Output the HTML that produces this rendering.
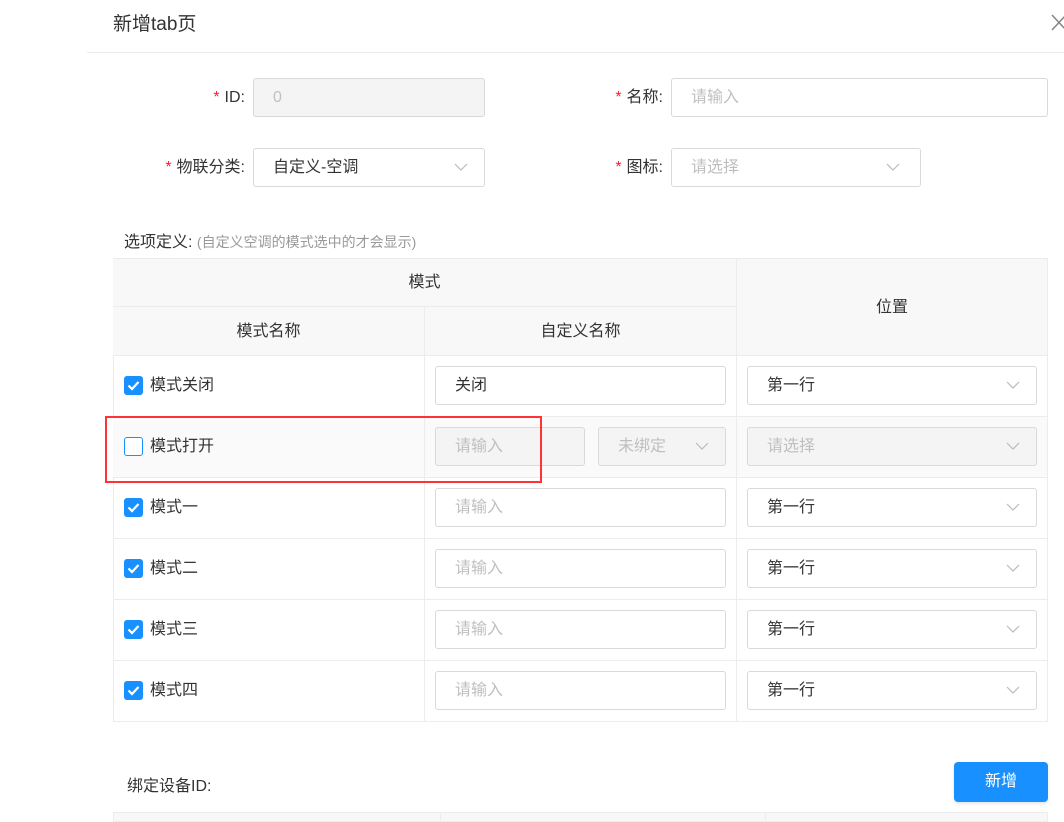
<!DOCTYPE html>
<html><head><meta charset="utf-8"><style>
*{margin:0;padding:0;box-sizing:border-box}
body{width:1064px;height:820px;overflow:hidden;background:#fff;font-family:"Liberation Sans","Noto Sans CJK SC",sans-serif;font-size:16px;color:#333;position:relative}
.a{position:absolute}
.inp{position:absolute;border:1px solid #d9d9d9;border-radius:3px;background:#fff;height:39px;line-height:38px;padding-left:19px;color:#333}
.ph{color:#bfbfbf}
.dis{background:#f4f4f4}
.arr{position:absolute;right:16px;top:13px;width:14px;height:10px}
.lbl{position:absolute;text-align:right;line-height:40px;color:#333}
.req{color:#f5222d;margin-right:5px}
.cell{position:absolute;border-right:1px solid #ececec;border-bottom:1px solid #ececec}
.th{background:#f8f8f8;text-align:center;color:#333}
.cb{position:absolute;left:124px;width:19px;height:19px;border-radius:3px;background:#1890ff}
.cbo{background:#fff;border:1px solid #1890ff}
.mt{position:absolute;left:150px;line-height:20px}
</style></head><body>
<svg width="0" height="0" style="position:absolute"><defs><symbol id="ch" viewBox="0 0 14 10"><path d="M1 2l6 6 6-6" fill="none" stroke="#bbb" stroke-width="1.2"/></symbol><symbol id="ck" viewBox="0 0 19 19"><path d="M4.5 9.5l3.5 3.5L14.5 6" fill="none" stroke="#fff" stroke-width="2.2"/></symbol></defs></svg>

<div class="a" style="left:113px;top:9px;font-size:19px;color:#333">新增tab页</div>
<div class="a" style="left:87px;top:52px;width:977px;height:1px;background:#ebebeb"></div>
<svg class="a" style="left:1050px;top:13px" width="16" height="18"><path d="M2 2l14 15M16 2L2 17" stroke="#888" stroke-width="1.6"/></svg>

<div class="lbl" style="left:150px;width:95px;top:78px"><span class="req">*</span>ID:</div>
<div class="inp dis ph" style="left:253px;top:78px;width:232px">0</div>
<div class="lbl" style="left:560px;width:103px;top:78px"><span class="req">*</span>名称:</div>
<div class="inp ph" style="left:671px;top:78px;width:377px">请输入</div>

<div class="lbl" style="left:130px;width:115px;top:148px"><span class="req">*</span>物联分类:</div>
<div class="inp" style="left:253px;top:148px;width:232px">自定义-空调<svg class="arr"><use href="#ch"/></svg></div>
<div class="lbl" style="left:560px;width:103px;top:148px"><span class="req">*</span>图标:</div>
<div class="inp ph" style="left:671px;top:148px;width:250px">请选择<svg class="arr" style="right:20px"><use href="#ch"/></svg></div>

<div class="a" style="left:124px;top:228px">选项定义: <span style="font-size:14px;color:#999">(自定义空调的模式选中的才会显示)</span></div>

<div class="a" style="left:113px;top:258px;width:935px;height:464px;border-top:1px solid #ececec;border-left:1px solid #ececec"></div>
<div class="cell th" style="left:113px;top:259px;width:624px;height:48px;line-height:48px">模式</div>
<div class="cell th" style="left:113px;top:307px;width:312px;height:49px;line-height:49px">模式名称</div>
<div class="cell th" style="left:425px;top:307px;width:312px;height:49px;line-height:49px">自定义名称</div>
<div class="cell th" style="left:737px;top:259px;width:311px;height:97px;line-height:97px">位置</div>

<div class="cell" style="left:113px;top:356px;width:312px;height:61px"></div><div class="cell" style="left:425px;top:356px;width:312px;height:61px"></div><div class="cell" style="left:737px;top:356px;width:311px;height:61px"></div>
<div class="cell" style="left:113px;top:417px;width:312px;height:61px;background:#fafafa"></div><div class="cell" style="left:425px;top:417px;width:312px;height:61px;background:#fafafa"></div><div class="cell" style="left:737px;top:417px;width:311px;height:61px;background:#fafafa"></div>
<div class="cell" style="left:113px;top:478px;width:312px;height:61px"></div><div class="cell" style="left:425px;top:478px;width:312px;height:61px"></div><div class="cell" style="left:737px;top:478px;width:311px;height:61px"></div>
<div class="cell" style="left:113px;top:539px;width:312px;height:61px"></div><div class="cell" style="left:425px;top:539px;width:312px;height:61px"></div><div class="cell" style="left:737px;top:539px;width:311px;height:61px"></div>
<div class="cell" style="left:113px;top:600px;width:312px;height:61px"></div><div class="cell" style="left:425px;top:600px;width:312px;height:61px"></div><div class="cell" style="left:737px;top:600px;width:311px;height:61px"></div>
<div class="cell" style="left:113px;top:661px;width:312px;height:61px"></div><div class="cell" style="left:425px;top:661px;width:312px;height:61px"></div><div class="cell" style="left:737px;top:661px;width:311px;height:61px"></div>

<svg class="cb" style="top:376px"><use href="#ck"/></svg><div class="mt" style="top:376px">模式关闭</div>
<div class="inp" style="left:435px;top:366px;width:291px">关闭</div>
<div class="inp" style="left:747px;top:366px;width:290px">第一行<svg class="arr"><use href="#ch"/></svg></div>

<div class="cb cbo" style="top:437px"></div><div class="mt" style="top:437px">模式打开</div>
<div class="inp dis ph" style="left:435px;top:427px;width:150px">请输入</div>
<div class="inp dis ph" style="left:598px;top:427px;width:128px">未绑定<svg class="arr"><use href="#ch"/></svg></div>
<div class="inp dis ph" style="left:747px;top:427px;width:290px">请选择<svg class="arr"><use href="#ch"/></svg></div>
<div class="a" style="left:105px;top:416px;width:437px;height:67px;border:2px solid #f33"></div>

<svg class="cb" style="top:498px"><use href="#ck"/></svg><div class="mt" style="top:498px">模式一</div>
<div class="inp ph" style="left:435px;top:488px;width:291px">请输入</div>
<div class="inp" style="left:747px;top:488px;width:290px">第一行<svg class="arr"><use href="#ch"/></svg></div>
<svg class="cb" style="top:559px"><use href="#ck"/></svg><div class="mt" style="top:559px">模式二</div>
<div class="inp ph" style="left:435px;top:549px;width:291px">请输入</div>
<div class="inp" style="left:747px;top:549px;width:290px">第一行<svg class="arr"><use href="#ch"/></svg></div>
<svg class="cb" style="top:620px"><use href="#ck"/></svg><div class="mt" style="top:620px">模式三</div>
<div class="inp ph" style="left:435px;top:610px;width:291px">请输入</div>
<div class="inp" style="left:747px;top:610px;width:290px">第一行<svg class="arr"><use href="#ch"/></svg></div>
<svg class="cb" style="top:681px"><use href="#ck"/></svg><div class="mt" style="top:681px">模式四</div>
<div class="inp ph" style="left:435px;top:671px;width:291px">请输入</div>
<div class="inp" style="left:747px;top:671px;width:290px">第一行<svg class="arr"><use href="#ch"/></svg></div>

<div class="a" style="left:127px;top:772px">绑定设备ID:</div>
<div class="a" style="left:954px;top:762px;width:94px;height:40px;background:#1890ff;border-radius:4px;color:#fff;text-align:center;line-height:40px;box-shadow:0 2px 3px rgba(0,0,0,.1)">新增</div>
<div class="a" style="left:113px;top:812px;width:935px;height:10px;background:#f8f8f8;border:1px solid #ececec"></div>
<div class="a" style="left:440px;top:812px;width:1px;height:8px;background:#ececec"></div>
<div class="a" style="left:765px;top:812px;width:1px;height:8px;background:#ececec"></div>
</body></html>
